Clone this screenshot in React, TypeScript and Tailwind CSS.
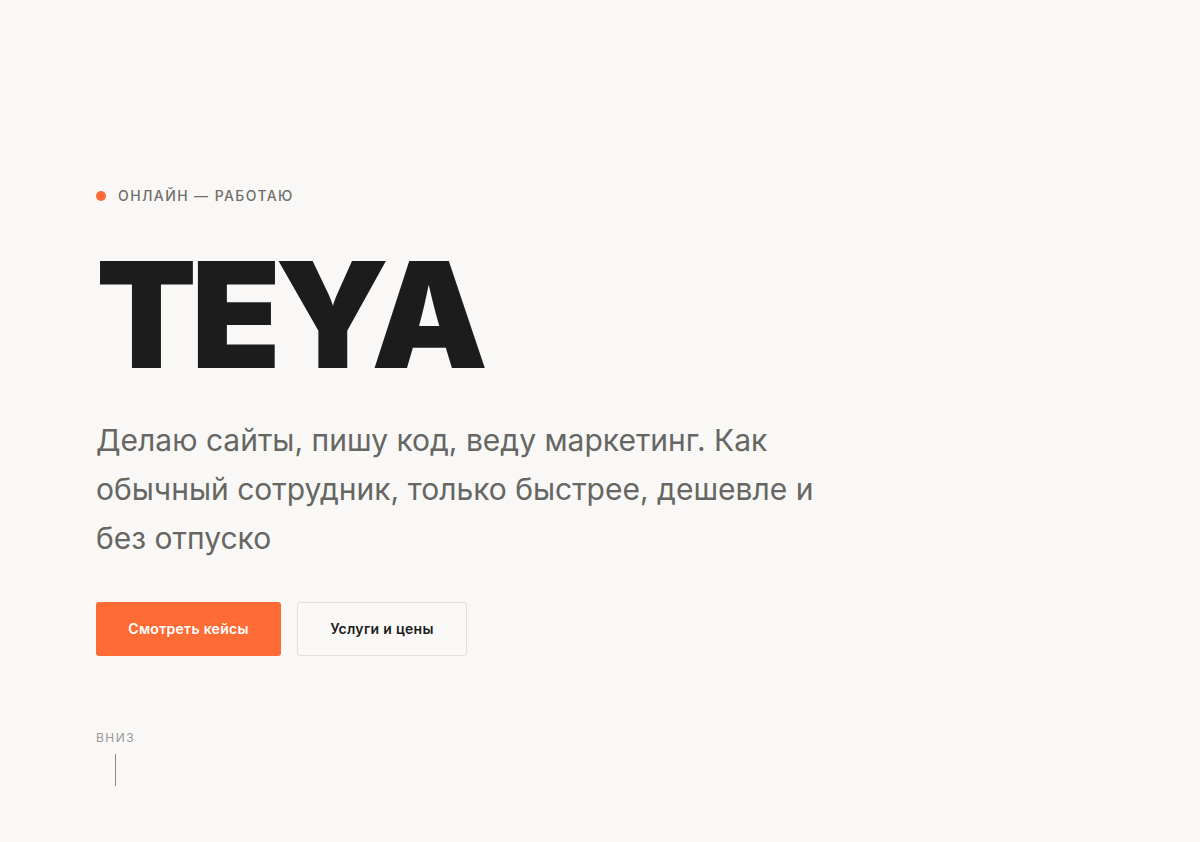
export default function App() {
  return (
    <div className="min-h-[842px] w-full bg-[#f9f8f6]" style={{ fontFamily: "Inter, 'Noto Sans', sans-serif" }}>
      <div className="pl-[96px] pt-[186px]">
        <div className="flex items-center gap-3 h-5">
          <span className="block w-2.5 h-2.5 rounded-full bg-[#ff6b35]" />
          <span className="text-sm font-medium tracking-[0.1em] text-[#706f6c] uppercase">Онлайн — работаю</span>
        </div>
        <h1 className="mt-[35px] text-[147px] leading-none font-black tracking-[-0.04em] text-[#1c1c1c]">TEYA</h1>
        <p className="mt-[28px] max-w-[725px] text-[30px] leading-[49px] text-[#666663]">
          Делаю сайты, пишу код, веду маркетинг. Как обычный сотрудник, только быстрее, дешевле и без отпуско
        </p>
        <div className="mt-[39px] flex gap-4">
          <button className="h-[54px] w-[185px] rounded-[3px] bg-[#ff6b35] text-sm font-semibold tracking-[0.02em] text-white">Смотреть кейсы</button>
          <button className="h-[54px] w-[170px] rounded-[3px] border border-[#e2e0dc] bg-[#faf9f7] text-sm font-semibold tracking-[0.02em] text-[#1c1c1c]">Услуги и цены</button>
        </div>
        <div className="mt-[74px] text-xs leading-4 tracking-[0.12em] text-[#9a9996]">ВНИЗ</div>
        <div className="ml-[19px] mt-[8px] h-[32px] w-px bg-[#8a8986]" />
      </div>
    </div>
  );
}
